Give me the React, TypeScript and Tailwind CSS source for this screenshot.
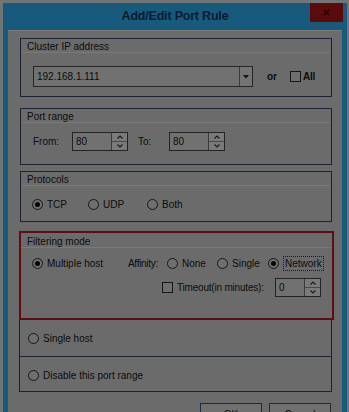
import { ReactNode } from "react";

// Radio button circle, filled when checked
const Radio = ({ checked = false }: { checked?: boolean }) => (
  <span className="w-[11px] h-[11px] rounded-full border border-[#161616] bg-[#6f6f6f] flex items-center justify-center shrink-0">
    {checked && <span className="w-[5px] h-[5px] rounded-full bg-[#050505]" />}
  </span>
);

const Checkbox = () => (
  <span className="block w-[11px] h-[11px] border border-[#161616] bg-[#6f6f6f] shrink-0" />
);

// Numeric field with up/down arrows
const Spin = ({ value, width }: { value: string; width: string }) => (
  <div className={`${width} h-[19px] border border-[#232323] bg-[#717171] flex`}>
    <span className="flex-1 pl-[3px] leading-[17px]">{value}</span>
    <div className="w-[16px] flex flex-col border-l border-[#3a3a3a] bg-[#7a7a7a]">
      <div className="flex-1 flex items-center justify-center border-b border-[#4a4a4a]">
        <svg width="6" height="4" viewBox="0 0 6 4">
          <path d="M0.5 3.5 L3 1 L5.5 3.5" fill="none" stroke="#1a1a1a" strokeWidth="1.2" />
        </svg>
      </div>
      <div className="flex-1 flex items-center justify-center">
        <svg width="6" height="4" viewBox="0 0 6 4">
          <path d="M0.5 0.5 L3 3 L5.5 0.5" fill="none" stroke="#1a1a1a" strokeWidth="1.2" />
        </svg>
      </div>
    </div>
  </div>
);

interface GroupProps {
  title: string;
  className?: string;
  children: ReactNode;
}

// Classic windows group box: title, faint rule, content
const Group = ({ title, className = "", children }: GroupProps) => (
  <div className={`border border-[#1b2234] flex flex-col shrink-0 ${className}`}>
    <div className="h-[13px] pl-[6px] pt-[2px] leading-[11px]">{title}</div>
    <div className="h-px bg-[#7a7a7a] mx-[1px]" />
    {children}
  </div>
);

export default function App() {
  return (
    <div className="w-[349px] h-[412px] overflow-hidden bg-[#727578] pl-[3px] pt-[3px] pr-[2px] font-['Liberation_Sans',Arial,sans-serif] text-[10px] text-[#0b0b0b]">
      <div className="min-h-[420px] bg-[#175a7c]">
        {/* TITLE BAR */}
        <div className="relative h-[27px] flex items-center justify-center">
          <span className="text-[12.5px] font-bold text-[#0c1a32] tracking-[-0.2px]">
            Add/Edit Port Rule
          </span>
          <div className="absolute right-[4px] top-0 w-[33px] h-[19px] bg-[#5c0b0d] flex items-center justify-center">
            <svg width="7" height="7" viewBox="0 0 7 7">
              <path d="M1 1 L6 6 M6 1 L1 6" stroke="#1a0505" strokeWidth="1.6" />
            </svg>
          </div>
        </div>

        {/* BODY */}
        <div className="mx-[5px] min-h-[393px] bg-[#6b6b6b] border-t border-[#7d7d7d] pl-[11px] pr-[10px] pt-[7px] flex flex-col">
          <Group title="Cluster IP address" className="h-[59px] ml-[1px]">
            <div className="mt-[13px] pl-[12px] flex items-center">
              <div className="w-[220px] h-[21px] border border-[#262626] bg-[#717171] flex">
                <span className="flex-1 pl-[3px] leading-[19px]">192.168.1.111</span>
                <div className="w-[13px] border-l border-[#3a3a3a] bg-[#747474] flex items-center justify-center">
                  <svg width="6" height="4" viewBox="0 0 6 4">
                    <path d="M0 0 L6 0 L3 3.5 Z" fill="#141414" />
                  </svg>
                </div>
              </div>
              <span className="ml-[14px] font-bold">or</span>
              <span className="ml-[13px]">
                <Checkbox />
              </span>
              <span className="ml-[2px] font-bold tracking-[-0.3px]">All</span>
            </div>
          </Group>

          <Group title="Port range" className="h-[57px] mt-[11px] ml-[1px]">
            <div className="mt-[9px] pl-[12px] flex items-center">
              <span className="w-[39px]">From:</span>
              <Spin value="80" width="w-[56px]" />
              <span className="w-[31px] ml-[10px]">To:</span>
              <Spin value="80" width="w-[56px]" />
            </div>
          </Group>

          <Group title="Protocols" className="h-[51px] mt-[6px] ml-[1px]">
            <div className="mt-[11px] pl-[11px] flex items-center">
              <span className="w-[56px] flex items-center gap-[4px]">
                <Radio checked />
                TCP
              </span>
              <span className="w-[59px] flex items-center gap-[4px]">
                <Radio />
                UDP
              </span>
              <span className="flex items-center gap-[4px]">
                <Radio />
                Both
              </span>
            </div>
          </Group>

          {/* Filtering mode, highlighted in red */}
          <div className="h-[89px] shrink-0 mt-[9px] -mr-[2px] border-2 border-[#5f0d12] flex flex-col">
            <div className="h-[14px] pl-[6px] pt-[3px] leading-[11px]">Filtering mode</div>
            <div className="h-px bg-[#7a7a7a]" />
            <div className="mt-[7px] pl-[11px] flex items-center h-[16px]">
              <span className="w-[96px] flex items-center gap-[4px]">
                <Radio checked />
                Multiple host
              </span>
              <span className="w-[39px] tracking-[-0.3px]">Affinity:</span>
              <span className="w-[50px] flex items-center gap-[4px]">
                <Radio />
                None
              </span>
              <span className="w-[51px] flex items-center gap-[4px]">
                <Radio />
                Single
              </span>
              <span className="flex items-center gap-[4px]">
                <Radio checked />
                <span className="border border-dotted border-[#1a1a1a] px-px leading-[13px]">Network</span>
              </span>
            </div>
            <div className="mt-[7px] pl-[141px] flex items-center">
              <Checkbox />
              <span className="ml-[4px] w-[98px] tracking-[-0.2px]">Timeout(in minutes):</span>
              <Spin value="0" width="w-[46px]" />
            </div>
          </div>

          <div className="h-[37px] shrink-0 border-x border-b border-[#1b2234] pl-[8px] flex items-center">
            <span className="flex items-center gap-[4px]">
              <Radio />
              Single host
            </span>
          </div>
          <div className="h-[35px] shrink-0 border-x border-b border-[#1b2234] pl-[8px] pt-[3px] flex items-center">
            <span className="flex items-center gap-[4px]">
              <Radio />
              Disable this port range
            </span>
          </div>

          {/* Dialog buttons, cut off by the bottom edge */}
          <div className="mt-[11px] pr-px flex justify-end gap-[7px] shrink-0">
            <div className="w-[62px] h-[22px] border border-[#1f2a3d] bg-[#707070] flex items-center justify-center">
              OK
            </div>
            <div className="w-[62px] h-[22px] border border-[#2a2a2a] bg-[#707070] flex items-center justify-center">
              Cancel
            </div>
          </div>
        </div>
      </div>
    </div>
  );
}
